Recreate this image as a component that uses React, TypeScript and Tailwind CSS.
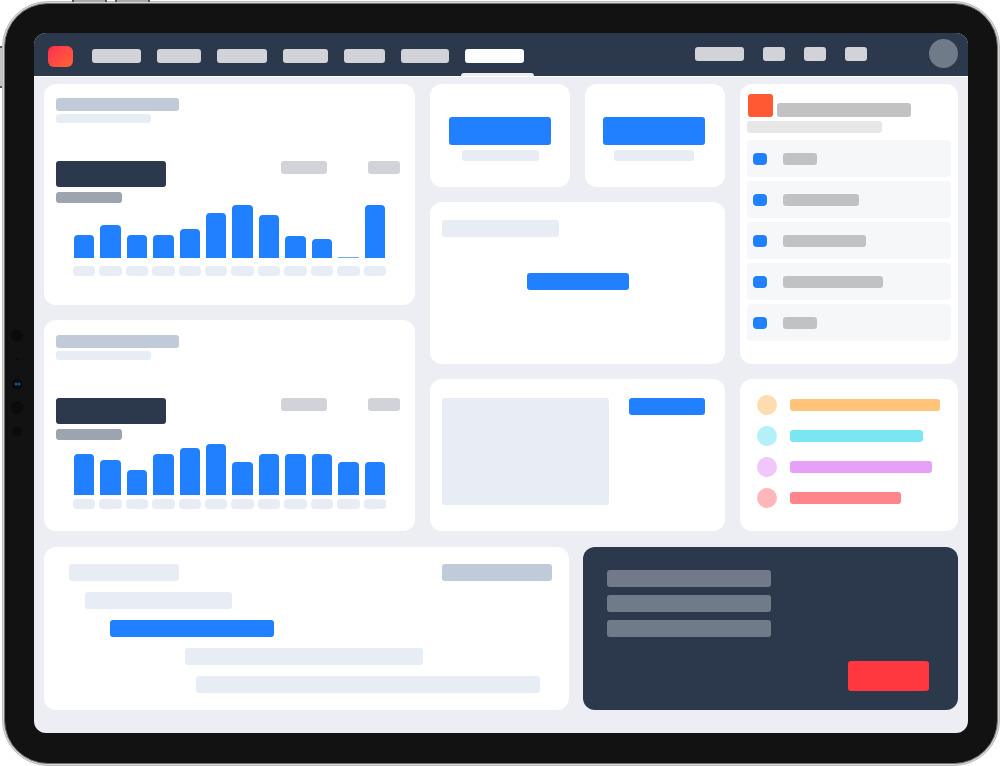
import React from "react";

interface ChartCardProps {
  label: string;
  values: number[];
  className: string;
  labelsClassName: string;
}

const revenue = [23, 33, 23, 23, 29, 45, 53, 43, 22, 19, 1, 53];
const orders = [41, 35, 25, 41, 47, 51, 33, 41, 41, 41, 33, 33];

const navItems = [
  { name: "Overview", width: "w-[49px]" },
  { name: "Sales", width: "w-[44px]" },
  { name: "Customers", width: "w-[50px]" },
  { name: "Reports", width: "w-[45px]" },
  { name: "Team", width: "w-[41px]" },
  { name: "Calendar", width: "w-[48px]" },
];

const actions = [
  { name: "Search", width: "w-[49px]" },
  { name: "Messages", width: "w-[22px]" },
  { name: "Alerts", width: "w-[22px]" },
  { name: "Settings", width: "w-[22px]" },
];

const tasks = ["w-[34px]", "w-[76px]", "w-[83px]", "w-[100px]", "w-[34px]"];

const categories = [
  { dot: "bg-[#ffdcb0]", bar: "w-[150px] bg-[#ffc47a]" },
  { dot: "bg-[#b3f0f8]", bar: "w-[133px] bg-[#7be6f3]" },
  { dot: "bg-[#f0c6fb]", bar: "w-[142px] bg-[#e6a0f7]" },
  { dot: "bg-[#ffb6ba]", bar: "w-[111px] bg-[#ff858b]" },
];

const Bar = ({ className }: { className: string }) => (
  <div className={`rounded-[3px] ${className}`} />
);

const Card = ({
  className = "",
  children,
}: {
  className?: string;
  children: React.ReactNode;
}) => (
  <section className={`rounded-xl bg-white ${className}`}>{children}</section>
);

const ChartCard: React.FC<ChartCardProps> = ({
  label,
  values,
  className,
  labelsClassName,
}) => (
  <Card className={`px-3 ${className}`}>
    <Bar className="h-[13px] w-[123px] bg-[#c1cad9]" />
    <Bar className="mt-[3px] h-[9px] w-[95px] bg-[#e8ecf5]" />

    <div className="mt-[38px] flex items-start pr-[3px]">
      <Bar className="h-[26px] w-[110px] bg-[#2c384b]" />
      <Bar className="ml-auto h-[13px] w-[46px] bg-[#d2d3d8]" />
      <Bar className="ml-[41px] h-[13px] w-8 bg-[#d2d3d8]" />
    </div>
    <Bar className="mt-[5px] h-[11px] w-[66px] bg-[#9ea4af]" />

    <div
      role="img"
      aria-label={label}
      className="mx-[17px] grid h-[55px] grid-cols-12 items-end gap-1"
    >
      {values.map((value, i) => (
        <div
          key={i}
          className={`mx-px ${value > 4 ? "rounded-t-[4px] bg-[#2080ff]" : "bg-[#6fadff]"}`}
          style={{ height: value }}
        />
      ))}
    </div>
    <div className={`mx-[17px] grid grid-cols-12 gap-1 ${labelsClassName}`}>
      {values.map((_, i) => (
        <div key={i} className="h-[10px] rounded bg-[#e8ecf5]" />
      ))}
    </div>
  </Card>
);

const Header = () => (
  <header className="flex h-[43px] items-stretch bg-[#2c384b] pr-[10px] pl-[14px]">
    <a
      href="#"
      aria-label="Home"
      className="mt-[13px] h-[21px] w-[25px] rounded-md bg-linear-to-br from-[#ff2850] to-[#ff6230]"
    />
    <nav className="ml-[19px] flex gap-4">
      {navItems.map((item) => (
        <a
          key={item.name}
          href="#"
          aria-label={item.name}
          className={`mt-4 h-[14px] rounded-[3px] bg-[#d2d3d8] ${item.width}`}
        />
      ))}
      <a
        href="#"
        aria-label="Dashboard"
        aria-current="page"
        className="relative block w-[59px] pt-4"
      >
        <span className="block h-[14px] rounded-[3px] bg-white" />
        <span className="absolute -right-[10px] bottom-0 -left-1 h-[3px] rounded-t-sm bg-[#edeef3]" />
      </a>
    </nav>
    <div className="ml-auto flex gap-[19px] pt-[14px]">
      {actions.map((action) => (
        <button
          key={action.name}
          type="button"
          aria-label={action.name}
          className={`h-[14px] rounded-[3px] bg-[#d2d3d8] ${action.width}`}
        />
      ))}
    </div>
    <button
      type="button"
      aria-label="Account"
      className="mt-[6px] ml-[62px] size-[29px] rounded-full bg-[#717a89]"
    />
  </header>
);

const Sensors = () => (
  <svg
    className="absolute top-[325px] left-[7px]"
    width="20"
    height="116"
    viewBox="0 0 20 116"
    aria-hidden="true"
  >
    <g fill="#0b0b0b">
      <circle cx="10" cy="10.500" r="6" />
      <circle cx="10" cy="34" r="1.500" />
      <circle cx="10" cy="59" r="5.500" />
      <circle cx="10" cy="82.500" r="6.500" />
      <circle cx="10" cy="106.500" r="5" />
    </g>
    <circle cx="9" cy="59" r="1.600" fill="#075393" />
    <circle cx="12" cy="59" r="1.600" fill="#075393" />
  </svg>
);

const App: React.FC = () => {
  return (
    <div className="relative min-h-screen bg-white pt-px pl-[2px]">
      {/* Hardware buttons */}
      <span className="absolute top-0 left-[72px] h-[2px] w-[35px] border-x-2 border-[#555] bg-[#aaa]" />
      <span className="absolute top-0 left-[115px] h-[2px] w-[35px] border-x-2 border-[#555] bg-[#aaa]" />
      <span className="absolute top-[46px] left-0 h-[42px] w-[2px] border-y-2 border-[#555] bg-[#c4c4c4]" />

      <div className="rounded-[46px] border border-[#bdbdbd] bg-[#d6d6d4] p-px">
        <div className="rounded-[44px] border border-[#77716f] bg-[#121212] px-[29px] pt-[29px] pb-[30px]">
          <main className="overflow-hidden rounded-xl bg-[#edeef3]">
            <Header />

            <div className="border-t border-white px-[10px] pt-[7px] pb-[23px]">
              <div className="grid grid-cols-[371fr_295fr_218fr] gap-[15px]">
                <div className="flex flex-col gap-[15px]">
                  <ChartCard
                    label="Revenue by month"
                    values={revenue}
                    className="pt-[14px] pb-[29px]"
                    labelsClassName="mt-2"
                  />
                  <ChartCard
                    label="Orders by month"
                    values={orders}
                    className="pt-[15px] pb-[22px]"
                    labelsClassName="mt-1"
                  />
                </div>

                <div className="flex flex-col gap-[15px]">
                  <div className="grid grid-cols-2 gap-[15px]">
                    <Card className="flex flex-col items-center pt-[33px] pb-[26px]">
                      <Bar className="h-7 w-[102px] bg-[#2080ff]" />
                      <Bar className="mt-[5px] h-[11px] w-[77px] bg-[#e8ecf5]" />
                    </Card>
                    <Card className="flex flex-col items-center pt-[33px] pr-[3px] pb-[26px]">
                      <Bar className="h-7 w-[102px] bg-[#2080ff]" />
                      <Bar className="mt-[5px] h-[11px] w-[80px] bg-[#e8ecf5]" />
                    </Card>
                  </div>
                  <Card className="px-3 pt-[18px] pb-[74px]">
                    <Bar className="h-[17px] w-[117px] bg-[#e8ecf5]" />
                    <button
                      type="button"
                      aria-label="Create"
                      className="mx-auto mt-9 block h-[17px] w-[102px] rounded-[3px] bg-[#2080ff]"
                    />
                  </Card>
                  <Card className="flex items-start justify-between pt-[19px] pr-5 pb-[26px] pl-3">
                    <Bar className="h-[107px] w-[167px] bg-[#e8ecf5]" />
                    <button
                      type="button"
                      aria-label="Open"
                      className="h-[17px] w-[76px] rounded-[3px] bg-[#2080ff]"
                    />
                  </Card>
                </div>

                <div className="flex flex-col gap-[15px]">
                  <Card className="px-[7px] pt-[10px] pb-[23px]">
                    <div className="flex items-end gap-1 pl-px">
                      <Bar className="h-[23px] w-[25px] bg-[#ff5934]" />
                      <Bar className="h-[14px] w-[134px] bg-[#c1c2c4]" />
                    </div>
                    <Bar className="mt-1 h-3 w-[135px] bg-[#e7e7e7]" />
                    <ul className="mt-[7px] flex flex-col gap-1">
                      {tasks.map((width, i) => (
                        <li
                          key={i}
                          className="flex h-[37px] items-center gap-4 rounded bg-[#f5f7f9] pl-[6px]"
                        >
                          <div className="h-3 w-[14px] rounded bg-[#2080ff]" />
                          <Bar className={`h-3 bg-[#c1c2c4] ${width}`} />
                        </li>
                      ))}
                    </ul>
                  </Card>
                  <Card className="pt-4 pb-[23px] pl-[17px]">
                    <ul className="flex flex-col gap-[11px]">
                      {categories.map((category) => (
                        <li
                          key={category.dot}
                          className="flex items-center gap-[13px]"
                        >
                          <span
                            className={`size-5 rounded-full ${category.dot}`}
                          />
                          <Bar className={`h-3 ${category.bar}`} />
                        </li>
                      ))}
                    </ul>
                  </Card>
                </div>
              </div>

              <div className="mt-4 grid grid-cols-[525fr_375fr] gap-[14px]">
                <Card className="flex flex-col gap-[11px] py-[17px] pr-[17px] pl-[25px]">
                  <div className="flex justify-between">
                    <Bar className="h-[17px] w-[110px] bg-[#e8ecf5]" />
                    <Bar className="h-[17px] w-[110px] bg-[#c1cad9]" />
                  </div>
                  <Bar className="ml-4 h-[17px] w-[147px] bg-[#e8ecf5]" />
                  <Bar className="ml-[41px] h-[17px] w-[164px] bg-[#2080ff]" />
                  <Bar className="ml-[116px] h-[17px] w-[238px] bg-[#e8ecf5]" />
                  <Bar className="ml-[127px] h-[17px] w-[344px] bg-[#e8ecf5]" />
                </Card>
                <section className="flex flex-col gap-2 rounded-xl bg-[#2c384b] pt-[23px] pr-[29px] pb-[19px] pl-6">
                  <Bar className="h-[17px] w-[164px] bg-[#717a89]" />
                  <Bar className="h-[17px] w-[164px] bg-[#717a89]" />
                  <Bar className="h-[17px] w-[164px] bg-[#717a89]" />
                  <button
                    type="button"
                    aria-label="Upgrade"
                    className="mt-4 h-[30px] w-[81px] self-end rounded-[3px] bg-[#ff383f]"
                  />
                </section>
              </div>
            </div>
          </main>
        </div>
      </div>

      <Sensors />
    </div>
  );
};

export default App;
